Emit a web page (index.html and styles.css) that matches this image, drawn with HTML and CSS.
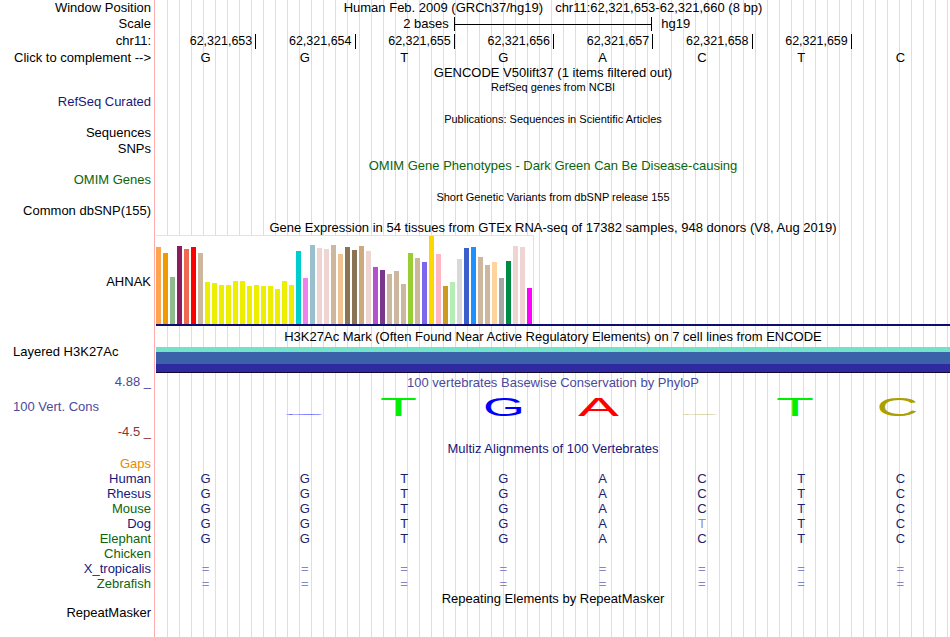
FILE: index.html
```html
<!DOCTYPE html>
<html>
<head>
<meta charset="utf-8">
<title>UCSC Genome Browser</title>
<link rel="stylesheet" href="styles.css">
</head>
<body>
<div class="browser">

  <section class="track">
    <div class="label">
      <div class="l16">Window Position</div>
      <div class="l16">Scale</div>
      <div class="l18">chr11:</div>
      <div class="l15">Click to complement --&gt;</div>
    </div>
    <div class="data">
      <div class="pos-line">Human Feb. 2009 (GRCh37/hg19)<span class="pos-range">chr11:62,321,653-62,321,660 (8 bp)</span></div>
      <div class="bases scale-row">
        <div class="scale-text">2 bases</div>
        <div class="scale-bar"></div>
        <div class="scale-db">hg19</div>
      </div>
      <div class="bases coord-row">
        <div class="coord"><span>62,321,653</span><i class="tick"></i></div>
        <div class="coord"><span>62,321,654</span><i class="tick"></i></div>
        <div class="coord"><span>62,321,655</span><i class="tick"></i></div>
        <div class="coord"><span>62,321,656</span><i class="tick"></i></div>
        <div class="coord"><span>62,321,657</span><i class="tick"></i></div>
        <div class="coord"><span>62,321,658</span><i class="tick"></i></div>
        <div class="coord"><span>62,321,659</span><i class="tick"></i></div>
        <div class="coord"></div>
      </div>
      <div class="bases dna-row">
        <span>G</span><span>G</span><span>T</span><span>G</span><span>A</span><span>C</span><span>T</span><span>C</span>
      </div>
    </div>
  </section>

  <section class="track t-gencode">
    <div class="label"></div>
    <div class="data">
      <div class="title t16">GENCODE V50lift37 (1 items filtered out)</div>
    </div>
  </section>

  <section class="track t-refseq">
    <div class="label pt13"><div class="l16 c-navy">RefSeq Curated</div></div>
    <div class="data">
      <div class="title small t12">RefSeq genes from NCBI</div>
      <div class="blank h18"></div>
    </div>
  </section>

  <section class="track t-pubs">
    <div class="label pt14">
      <div class="l16">Sequences</div>
      <div class="l16">SNPs</div>
    </div>
    <div class="data">
      <div class="title small t14 pt1">Publications: Sequences in Scientific Articles</div>
      <div class="blank h31"></div>
    </div>
  </section>

  <section class="track t-omim">
    <div class="label pt15"><div class="l16 c-green">OMIM Genes</div></div>
    <div class="data">
      <div class="title t16 pt1 c-green">OMIM Gene Phenotypes - Dark Green Can Be Disease-causing</div>
      <div class="blank h14"></div>
    </div>
  </section>

  <section class="track t-snp">
    <div class="label pt15"><div class="l16">Common dbSNP(155)</div></div>
    <div class="data">
      <div class="title small t16 pt1">Short Genetic Variants from dbSNP release 155</div>
      <div class="blank h14"></div>
    </div>
  </section>

  <section class="track t-gtex">
    <div class="label pt55"><div class="l16">AHNAK</div></div>
    <div class="data">
      <div class="title t15 pt1">Gene Expression in 54 tissues from GTEx RNA-seq of 17382 samples, 948 donors (V8, Aug 2019)</div>
      <div class="chart">
        <div class="bar" style="height:77px;background:#FFA54F"></div>
        <div class="bar" style="height:71px;background:#EE9A00"></div>
        <div class="bar" style="height:47px;background:#8FBC8F"></div>
        <div class="bar" style="height:78px;background:#8B1C62"></div>
        <div class="bar" style="height:75px;background:#EE6A50"></div>
        <div class="bar" style="height:77px;background:#FF0000"></div>
        <div class="bar" style="height:71px;background:#CDB79E"></div>
        <div class="bar" style="height:42px;background:#EEEE00"></div>
        <div class="bar" style="height:41px;background:#EEEE00"></div>
        <div class="bar" style="height:39px;background:#EEEE00"></div>
        <div class="bar" style="height:39px;background:#EEEE00"></div>
        <div class="bar" style="height:43px;background:#EEEE00"></div>
        <div class="bar" style="height:43px;background:#EEEE00"></div>
        <div class="bar" style="height:38px;background:#EEEE00"></div>
        <div class="bar" style="height:39px;background:#EEEE00"></div>
        <div class="bar" style="height:38px;background:#EEEE00"></div>
        <div class="bar" style="height:38px;background:#EEEE00"></div>
        <div class="bar" style="height:35px;background:#EEEE00"></div>
        <div class="bar" style="height:43px;background:#EEEE00"></div>
        <div class="bar" style="height:39px;background:#EEEE00"></div>
        <div class="bar" style="height:73px;background:#00CDCD"></div>
        <div class="bar" style="height:46px;background:#EE82EE"></div>
        <div class="bar" style="height:79px;background:#9AC0CD"></div>
        <div class="bar" style="height:76px;background:#EED5D2"></div>
        <div class="bar" style="height:75px;background:#EED5D2"></div>
        <div class="bar" style="height:79px;background:#CDB79E"></div>
        <div class="bar" style="height:70px;background:#EEC591"></div>
        <div class="bar" style="height:77px;background:#8B7355"></div>
        <div class="bar" style="height:74px;background:#8B7355"></div>
        <div class="bar" style="height:78px;background:#CDAA7D"></div>
        <div class="bar" style="height:73px;background:#EED5D2"></div>
        <div class="bar" style="height:57px;background:#B452CD"></div>
        <div class="bar" style="height:54px;background:#7A378B"></div>
        <div class="bar" style="height:50px;background:#CDB79E"></div>
        <div class="bar" style="height:53px;background:#CDB79E"></div>
        <div class="bar" style="height:40px;background:#CDB79E"></div>
        <div class="bar" style="height:71px;background:#9ACD32"></div>
        <div class="bar" style="height:66px;background:#CDB79E"></div>
        <div class="bar" style="height:62px;background:#7A67EE"></div>
        <div class="bar" style="height:88px;background:#FFD700"></div>
        <div class="bar" style="height:70px;background:#FFB6C1"></div>
        <div class="bar" style="height:38px;background:#CD9B1D"></div>
        <div class="bar" style="height:42px;background:#B4EEB4"></div>
        <div class="bar" style="height:65px;background:#D9D9D9"></div>
        <div class="bar" style="height:76px;background:#3A5FCD"></div>
        <div class="bar" style="height:77px;background:#1E90FF"></div>
        <div class="bar" style="height:67px;background:#CDB79E"></div>
        <div class="bar" style="height:59px;background:#CDB79E"></div>
        <div class="bar" style="height:62px;background:#FFD39B"></div>
        <div class="bar" style="height:46px;background:#A6A6A6"></div>
        <div class="bar" style="height:63px;background:#008B45"></div>
        <div class="bar" style="height:78px;background:#EED5D2"></div>
        <div class="bar" style="height:77px;background:#EED5D2"></div>
        <div class="bar" style="height:36px;background:#FF00FF"></div>
      </div>
      <div class="axis-line"></div>
    </div>
  </section>

  <section class="track t-h3k">
    <div class="label pt18"><div class="l16 flush-left">Layered H3K27Ac</div></div>
    <div class="data">
      <div class="title t20 pt1">H3K27Ac Mark (Often Found Near Active Regulatory Elements) on 7 cell lines from ENCODE</div>
      <div class="band band-a"></div>
      <div class="band band-b"></div>
      <div class="band band-c"></div>
      <div class="band band-d"></div>
    </div>
  </section>

  <section class="track t-cons">
    <div class="label pt1 cons-axis">
      <div class="l16 c-slate">4.88 _</div>
      <div class="l16 c-slate flush-left">100 Vert. Cons</div>
      <div class="l16 c-rust">-4.5 _</div>
    </div>
    <div class="data">
      <div class="title t16 pt2 c-slate">100 vertebrates Basewise Conservation by PhyloP</div>
      <svg class="logo" width="794" height="50" viewBox="0 0 794 50">
        <text transform="translate(148.5 24) scale(1 0.1)" text-anchor="middle" textLength="43" lengthAdjust="spacingAndGlyphs" fill="#1a1aff">G</text>
        <text x="242.5" y="25" text-anchor="middle" textLength="37" lengthAdjust="spacingAndGlyphs" fill="#00ee00">T</text>
        <text x="348" y="25" text-anchor="middle" textLength="42" lengthAdjust="spacingAndGlyphs" fill="#0000ff">G</text>
        <text x="442.5" y="25" text-anchor="middle" textLength="41" lengthAdjust="spacingAndGlyphs" fill="#ff0000">A</text>
        <text transform="translate(543.5 24) scale(1 0.1)" text-anchor="middle" textLength="41" lengthAdjust="spacingAndGlyphs" fill="#c4bc70">C</text>
        <text x="639" y="25" text-anchor="middle" textLength="38" lengthAdjust="spacingAndGlyphs" fill="#00ee00">T</text>
        <text x="741.5" y="25" text-anchor="middle" textLength="42" lengthAdjust="spacingAndGlyphs" fill="#aaa000">C</text>
      </svg>
    </div>
  </section>

  <section class="track t-multiz">
    <div class="label pt15">
      <div class="l15 c-orange">Gaps</div>
      <div class="l15 c-navy">Human</div>
      <div class="l15 c-navy">Rhesus</div>
      <div class="l15 c-green">Mouse</div>
      <div class="l15 c-navy">Dog</div>
      <div class="l15 c-green">Elephant</div>
      <div class="l15 c-green">Chicken</div>
      <div class="l15 c-navy">X_tropicalis</div>
      <div class="l15 c-green">Zebrafish</div>
    </div>
    <div class="data">
      <div class="title t15 c-navy">Multiz Alignments of 100 Vertebrates</div>
      <div class="bases aln"></div>
      <div class="bases aln"><span>G</span><span>G</span><span>T</span><span>G</span><span>A</span><span>C</span><span>T</span><span>C</span></div>
      <div class="bases aln"><span>G</span><span>G</span><span>T</span><span>G</span><span>A</span><span>C</span><span>T</span><span>C</span></div>
      <div class="bases aln"><span>G</span><span>G</span><span>T</span><span>G</span><span>A</span><span>C</span><span>T</span><span>C</span></div>
      <div class="bases aln"><span>G</span><span>G</span><span>T</span><span>G</span><span>A</span><span class="mm">T</span><span>T</span><span>C</span></div>
      <div class="bases aln"><span>G</span><span>G</span><span>T</span><span>G</span><span>A</span><span>C</span><span>T</span><span>C</span></div>
      <div class="bases aln"></div>
      <div class="bases aln eq"><span>=</span><span>=</span><span>=</span><span>=</span><span>=</span><span>=</span><span>=</span><span>=</span></div>
      <div class="bases aln eq"><span>=</span><span>=</span><span>=</span><span>=</span><span>=</span><span>=</span><span>=</span><span>=</span></div>
    </div>
  </section>

  <section class="track t-rmsk">
    <div class="label pt14"><div class="l16">RepeatMasker</div></div>
    <div class="data">
      <div class="title t16">Repeating Elements by RepeatMasker</div>
    </div>
  </section>

</div>
</body>
</html>
```

FILE: styles.css
```css
* {
  box-sizing: border-box;
  margin: 0;
  padding: 0;
}

html,
body {
  width: 950px;
  height: 637px;
  overflow: hidden;
  background: #ffffff;
}

body {
  font-family: "Liberation Sans", Arial, Helvetica, sans-serif;
  font-size: 13px;
  color: #000000;
}

.browser {
  display: flex;
  flex-direction: column;
  height: 637px;
}

.track {
  display: grid;
  grid-template-columns: 154px 796px;
}

.t-rmsk {
  flex: 1;
}

/* left label column */
.label {
  text-align: right;
  padding-right: 3px;
  white-space: nowrap;
}

.flush-left {
  text-align: left;
  padding-left: 13px;
}

.l15 { height: 15px; line-height: 15px; }
.l16 { height: 16px; line-height: 16px; }
.l18 { height: 18px; line-height: 18px; }

.pt1 { padding-top: 1px; }
.pt2 { padding-top: 2px; }
.pt13 { padding-top: 13px; }
.pt14 { padding-top: 14px; }
.pt15 { padding-top: 15px; }
.pt18 { padding-top: 18px; }
.pt55 { padding-top: 55px; }

.cons-axis {
  display: flex;
  flex-direction: column;
  gap: 9px;
}

/* data column with guidelines */
.data {
  border-left: 1px solid #ffacac;
  padding-left: 1px;
  white-space: nowrap;
  background-image: linear-gradient(90deg, transparent 11px, #dadaf9 11px);
  background-size: 12px 100%;
  background-origin: content-box;
  background-clip: content-box;
}

.title {
  text-align: center;
}

.title.small {
  font-size: 11px;
}

.t12 { height: 12px; line-height: 12px; }
.t14 { height: 15px; line-height: 14px; }
.t15 { height: 15px; line-height: 15px; }
.t16 { height: 16px; line-height: 16px; }
.title.pt1.t15 { height: 16px; }
.title.pt1.t16 { height: 17px; }
.title.pt1.t20 { height: 21px; line-height: 20px; }
.title.pt2.t16 { height: 18px; }

.blank.h14 { height: 14px; }
.blank.h18 { height: 18px; }
.blank.h31 { height: 31px; }

/* colours */
.c-navy { color: #17177a; }
.c-green { color: #0b650b; }
.c-slate { color: #4a4a9c; }
.c-rust { color: #8e3434; }
.c-orange { color: #e68a00; }

/* ruler */
.pos-line {
  height: 16px;
  line-height: 16px;
  text-align: center;
}

.pos-range {
  margin-left: 12px;
}

.bases {
  display: grid;
  grid-template-columns: repeat(8, 1fr);
}

.scale-row {
  height: 16px;
  align-items: center;
}

.scale-text {
  grid-column: 1 / 4;
  text-align: right;
  padding-right: 5px;
  line-height: 16px;
}

.scale-bar {
  grid-column: 4 / 6;
  height: 14px;
  border-left: 1px solid #000;
  border-right: 1px solid #000;
  background: linear-gradient(#000, #000) center / 100% 1px no-repeat;
}

.scale-db {
  grid-column: 6 / 9;
  padding-left: 9px;
  line-height: 16px;
}

.coord-row {
  height: 18px;
}

.coord {
  display: flex;
  justify-content: flex-end;
  align-items: center;
}

.coord span {
  margin-right: 3px;
  line-height: 16px;
  font-size: 12.5px;
}

.tick {
  display: block;
  width: 1px;
  height: 15px;
  background: #000;
  margin-right: -1px;
}

.dna-row {
  height: 15px;
  line-height: 15px;
  text-align: center;
}

/* GTEx chart */
.chart {
  width: 378px;
  height: 89px;
  display: flex;
  align-items: flex-end;
  gap: 2px;
  background: #ffffff;
  border-top: 1px solid #e2e2e2;
  border-right: 1px solid #e2e2e2;
}

.bar {
  width: 5px;
  flex: none;
}

.axis-line {
  height: 2px;
  background: #0d0d70;
}

/* H3K27Ac layered bands */
.band-a { height: 5px; background: #72e3c9; }
.band-b { height: 12px; background: #3b62a8; }
.band-c { height: 8px; background: #302aa0; }
.band-d { height: 1px; background: #120a34; }

/* conservation logo */
.logo {
  display: block;
}

.logo text {
  font-family: "Liberation Sans", Arial, Helvetica, sans-serif;
  font-size: 25px;
}

/* multiz */
.aln {
  height: 15px;
  line-height: 15px;
  text-align: center;
  color: #1d1d6e;
}

.aln .mm {
  color: #8e8ec4;
}

.aln.eq {
  color: #8585c6;
}
```
